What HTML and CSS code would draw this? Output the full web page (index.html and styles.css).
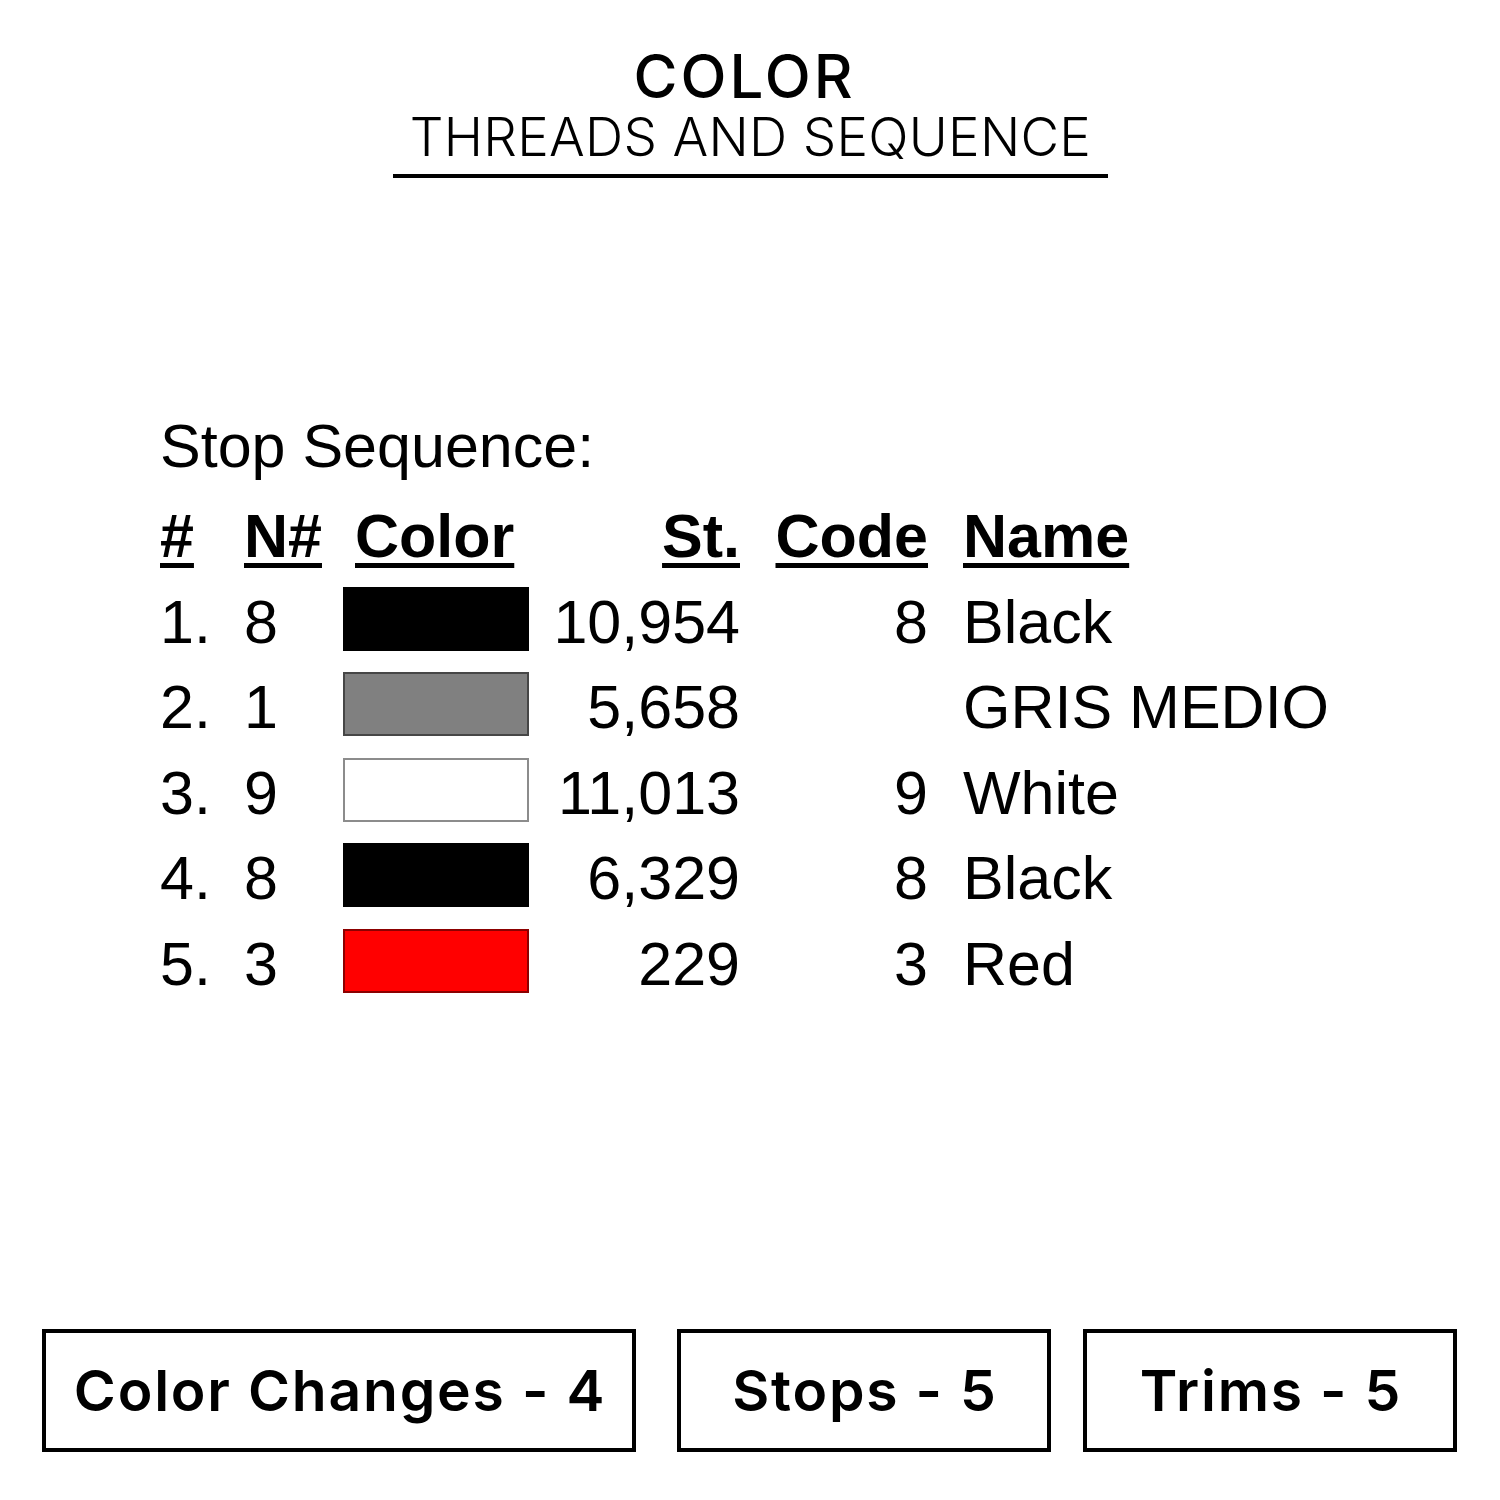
FILE: index.html
```html
<!DOCTYPE html>
<html>
<head>
<meta charset="utf-8">
<link rel="stylesheet" href="styles.css">
</head>
<body>
<header class="title-block">
  <div class="title">COLOR</div>
  <div class="subtitle">THREADS AND SEQUENCE</div>
</header>

<section class="sequence">
  <div class="stop-label">Stop Sequence:</div>
  <div class="grid">
    <div class="cell hd"><span class="u">#</span></div>
    <div class="cell hd"><span class="u">N#</span></div>
    <div class="cell hd hd-color"><span class="u">Color</span></div>
    <div class="cell hd r"><span class="u">St.</span></div>
    <div class="cell hd r"><span class="u">Code</span></div>
    <div class="cell hd name"><span class="u">Name</span></div>

    <div class="cell">1.</div><div class="cell">8</div>
    <div class="swatch sw-black"></div>
    <div class="cell r">10,954</div><div class="cell r">8</div><div class="cell name">Black</div>

    <div class="cell">2.</div><div class="cell">1</div>
    <div class="swatch sw-gray"></div>
    <div class="cell r">5,658</div><div class="cell r"></div><div class="cell name">GRIS MEDIO</div>

    <div class="cell">3.</div><div class="cell">9</div>
    <div class="swatch sw-white"></div>
    <div class="cell r">11,013</div><div class="cell r">9</div><div class="cell name">White</div>

    <div class="cell">4.</div><div class="cell">8</div>
    <div class="swatch sw-black"></div>
    <div class="cell r">6,329</div><div class="cell r">8</div><div class="cell name">Black</div>

    <div class="cell">5.</div><div class="cell">3</div>
    <div class="swatch sw-red"></div>
    <div class="cell r">229</div><div class="cell r">3</div><div class="cell name">Red</div>
  </div>
</section>

<footer class="stats">
  <div class="box box-wide">Color Changes - 4</div>
  <div class="box">Stops - 5</div>
  <div class="box">Trims - 5</div>
</footer>
</body>
</html>
```

FILE: styles.css
```css
html, body {
  margin: 0;
  padding: 0;
  background: #ffffff;
}

body {
  width: 1500px;
  height: 1500px;
  display: flex;
  flex-direction: column;
  color: #000;
  font-family: "Liberation Sans", Arial, sans-serif;
}

.title-block {
  width: 715px;
  margin-left: 393px;
  padding-top: 46px;
  padding-bottom: 10px;
  border-bottom: 4px solid #000;
  text-align: center;
  font-family: Inter, "DejaVu Sans", sans-serif;
}

.title {
  font-size: 60px;
  line-height: 60px;
  font-weight: 500;
  letter-spacing: 3px;
  padding-right: 12px;
}

.subtitle {
  margin-top: 5px;
  font-size: 53px;
  line-height: 53px;
  font-weight: 300;
  letter-spacing: 0.3px;
}

.sequence {
  margin-top: 226px;
  margin-left: 160px;
  font-size: 61px;
}

.stop-label {
  line-height: 85.5px;
  white-space: nowrap;
}

.grid {
  margin-top: 4.5px;
  display: grid;
  grid-template-columns: 84px 99px 186px 211px 188px auto;
  grid-auto-rows: 85.5px;
}

.cell {
  line-height: 85.5px;
  white-space: nowrap;
}

.r {
  text-align: right;
}

.name {
  padding-left: 35px;
}

.hd {
  font-weight: bold;
}

.hd-color {
  padding-left: 12px;
}

.u {
  text-decoration: underline;
  text-decoration-thickness: 5px;
  text-underline-offset: 6px;
}

.swatch {
  align-self: center;
  margin-bottom: 7px;
  width: 186px;
  height: 64px;
  box-sizing: border-box;
  border: 2px solid rgba(0, 0, 0, 0.45);
}

.sw-black { background: #000000; }
.sw-gray { background: #808080; }
.sw-white { background: #ffffff; }
.sw-red { background: #ff0000; }

.stats {
  margin-top: auto;
  padding: 0 0 48px 42px;
  display: flex;
  gap: 32px;
}

.box {
  width: 374px;
  height: 123px;
  box-sizing: border-box;
  border: 4px solid #000;
  display: flex;
  align-items: center;
  justify-content: center;
  font-family: Inter, "DejaVu Sans", sans-serif;
  font-weight: 600;
  font-size: 57px;
  letter-spacing: 1.8px;
  padding-left: 2px;
  white-space: nowrap;
}

.box-wide {
  width: 594px;
  margin-right: 9px;
}
```
